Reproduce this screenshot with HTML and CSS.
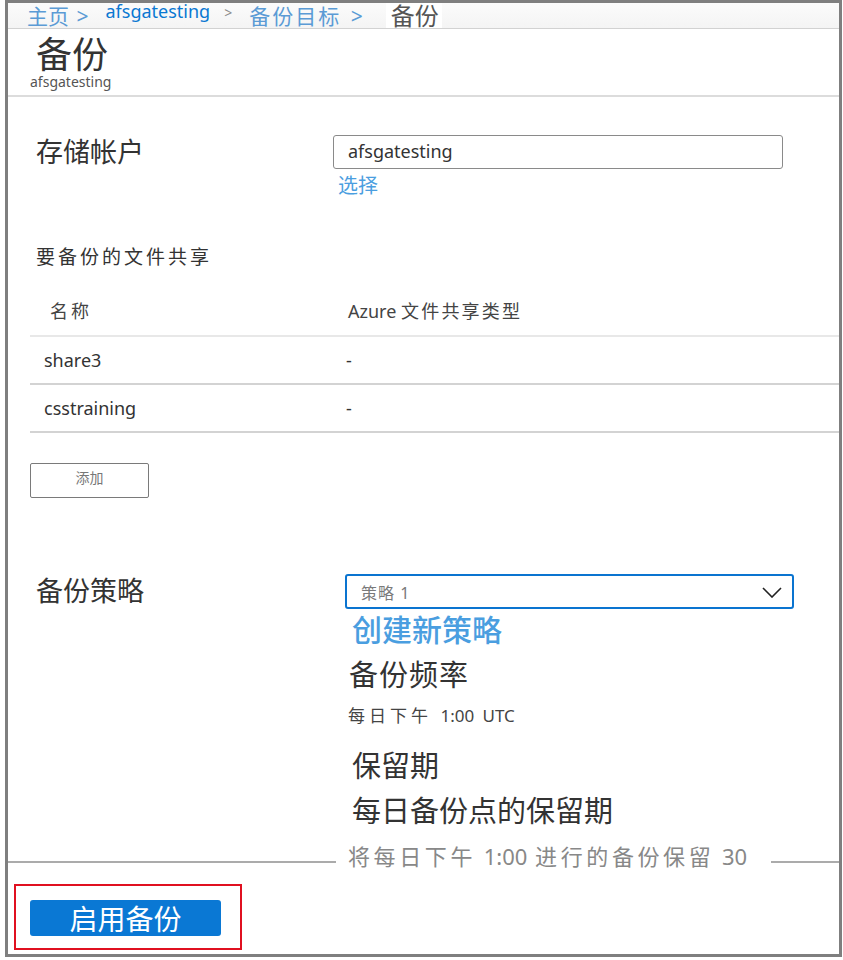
FILE: index.html
```html
<!DOCTYPE html>
<html lang="zh-CN">
<head>
<meta charset="utf-8">
<title>备份</title>
<link rel="stylesheet" href="styles.css">
</head>
<body>
<div class="frame">
  <nav class="crumbs">
    <span class="crumb home">主页 &gt;</span>
    <span class="crumb acct">afsgatesting</span>
    <span class="crumb sep">&gt;</span>
    <span class="crumb target">备份目标 &gt;</span>
    <span class="crumb current">备份</span>
  </nav>
  <header class="blade-head">
    <h1 class="title">备份</h1>
    <div class="subtitle">afsgatesting</div>
  </header>
  <main class="content">
    <section class="row storage">
      <div class="label">存储帐户</div>
      <div class="field">
        <div class="textbox">afsgatesting</div>
        <a class="link select">选择</a>
      </div>
    </section>

    <section class="shares">
      <div class="shares-title">要备份的文件共享</div>
      <div class="table">
        <div class="tr th">
          <div class="c1">名称</div>
          <div class="c2">Azure <span class="cjk">文件共享类型</span></div>
        </div>
        <div class="tr">
          <div class="c1">share3</div>
          <div class="c2">-</div>
        </div>
        <div class="tr">
          <div class="c1">csstraining</div>
          <div class="c2">-</div>
        </div>
      </div>
      <button class="btn-add">添加</button>
    </section>

    <section class="row policy">
      <div class="label">备份策略</div>
      <div class="field">
        <div class="dropdown">
          <span>策略 1</span>
          <svg class="chev" width="20" height="11" viewBox="0 0 20 11"><polyline points="1,1 10,10 19,1" fill="none" stroke="#222" stroke-width="1.6"/></svg>
        </div>
        <a class="link create">创建新策略</a>
        <div class="h-freq">备份频率</div>
        <div class="freq"><span class="cjk">每日下午</span> 1:00 UTC</div>
        <div class="h-ret">保留期</div>
        <div class="h-daily">每日备份点的保留期</div>
      </div>
    </section>
  </main>
  <div class="divider">
    <span class="line left"></span>
    <span class="keep"><span class="cjk">将每日下午</span> 1:00 <span class="cjk">进行的备份保留</span> 30</span>
    <span class="line right"></span>
  </div>
  <div class="highlight">
    <button class="btn-primary">启用备份</button>
  </div>
</div>
</body>
</html>
```

FILE: styles.css
```css
* { box-sizing: border-box; }
html, body { margin: 0; padding: 0; background: #ffffff; }
body {
  font-family: "Noto Sans", "Noto Sans CJK SC", sans-serif;
  color: #333;
  width: 843px;
  height: 960px;
  overflow: hidden;
}
.frame {
  margin-left: 5px;
  width: 837px;
  height: 957px;
  border: 3px solid #7f7f7f;
  overflow: hidden;
  background: #fff;
}

/* breadcrumb */
.crumbs {
  height: 26px;
  background: linear-gradient(#fbfbfb, #f4f4f4);
  border-bottom: 1px solid #d2d2d2;
  display: flex;
  align-items: flex-start;
  white-space: nowrap;
}
.crumb { display: block; }
.home { margin-left: 19px; font-size: 21px; line-height: 24px; color: #5b9bd5; margin-top: 1px; word-spacing: 2px; }
.acct { margin-left: 17px; font-size: 18px; line-height: 20px; color: #0a78d2; margin-top: -2px; }
.sep { margin-left: 14px; font-size: 14px; line-height: 14px; color: #8a8a8a; margin-top: 3px; }
.target { margin-left: 17px; font-size: 21px; line-height: 24px; color: #5b9bd5; margin-top: 1px; letter-spacing: 2px; word-spacing: 2px; }
.current { margin-left: 21px; padding: 0 3px 0 5px; background: #fff; height: 25px; font-size: 24px; line-height: 26px; color: #555; }

/* blade header */
.blade-head {
  height: 68px;
  border-bottom: 2px solid #dcdcdc;
  padding-left: 28px;
}
.title {
  margin: 0;
  padding-top: 8px;
  font-size: 36px;
  line-height: 36px;
  font-weight: 400;
  color: #333;
}
.subtitle {
  margin-left: -6px;
  margin-top: 1px;
  font-size: 14px;
  line-height: 16px;
  color: #555;
}

/* content */
.content { padding-left: 28px; }
.row { display: grid; }
.label { font-size: 27px; line-height: 34px; color: #333; }
.link { display: block; color: #4a9ee0; cursor: pointer; }

.storage { grid-template-columns: 297px 450px; margin-top: 38px; }
.textbox {
  height: 34px;
  border: 1px solid #8a8a8a;
  border-radius: 3px;
  padding-left: 14px;
  font-size: 18px;
  line-height: 31px;
  color: #333;
}
.select { margin-top: 5px; margin-left: 5px; font-size: 20px; line-height: 24px; }

.shares { margin-top: 47px; }
.shares-title { font-size: 19px; line-height: 24px; letter-spacing: 3px; color: #333; }
.table { margin-top: 16px; margin-left: -6px; width: 809px; }
.tr {
  display: flex;
  align-items: center;
  height: 48px;
  border-bottom: 2px solid #d3d3d3;
  font-size: 18px;
  color: #333;
}
.tr.th { height: 52px; border-bottom-color: #e8e8e8; font-size: 18px; color: #444; }
.tr .c1 { width: 316px; padding-left: 14px; }
.tr.th .c1 { padding-left: 20px; letter-spacing: 3px; }
.tr .c2 { padding-left: 0; }
.tr.th .c2 { padding-left: 2px; }
.cjk { letter-spacing: 2.2px; }
.btn-add {
  display: block;
  margin-top: 30px;
  margin-left: -6px;
  width: 119px;
  height: 35px;
  border: 1px solid #7a7a7a;
  border-radius: 2px;
  background: #fff;
  font-family: "Noto Sans CJK SC", sans-serif;
  font-size: 14px;
  line-height: 16px;
  color: #777;
  padding: 0 0 8px 0;
}

.policy { grid-template-columns: 309px 449px; margin-top: 76px; }
.dropdown {
  height: 35px;
  border: 2px solid #0a74d0;
  border-radius: 3px;
  display: flex;
  align-items: center;
  justify-content: space-between;
  padding: 0 10px 0 14px;
  font-size: 16px;
  color: #7a7a7a;
}
.dropdown span { letter-spacing: 1px; }
.chev { display: block; margin-top: 1px; }
.create { margin-top: 4px; margin-left: 7px; font-size: 30px; line-height: 34px; font-weight: 500; }
.h-freq { margin-top: 11px; margin-left: 4px; font-size: 29px; line-height: 34px; color: #333; letter-spacing: 1px; }
.freq { margin-top: 13px; margin-left: 3px; font-size: 17px; line-height: 22px; color: #444; word-spacing: 4px; }
.freq .cjk { letter-spacing: 4px; }
.h-ret { margin-top: 22px; margin-left: 7px; font-size: 29px; line-height: 34px; font-weight: 400; color: #333; }
.h-daily { margin-top: 11px; margin-left: 7px; font-size: 29px; line-height: 34px; font-weight: 400; color: #333; }

/* divider with overlaid text */
.divider {
  display: flex;
  align-items: flex-start;
  margin-top: 15px;
  height: 26px;
}
.line { display: block; height: 2px; background: #ababab; margin-top: 18px; }
.line.left { width: 328px; }
.line.right { flex: 1; }
.keep {
  padding: 0 24px 0 12px;
  font-size: 22px;
  line-height: 26px;
  color: #888;
  white-space: nowrap;
  word-spacing: 2px;
}
.keep .cjk { letter-spacing: 3.6px; }

/* highlighted primary button */
.highlight {
  margin-top: 15px;
  margin-left: 6px;
  width: 228px;
  height: 66px;
  border: 2px solid #e01020;
  padding: 14px 0 0 14px;
}
.btn-primary {
  display: block;
  width: 191px;
  height: 36px;
  border: none;
  border-radius: 3px;
  background: #0a78d4;
  color: #fff;
  font-family: "Noto Sans CJK SC", sans-serif;
  font-size: 28px;
  line-height: 34px;
  padding: 0;
}
```
